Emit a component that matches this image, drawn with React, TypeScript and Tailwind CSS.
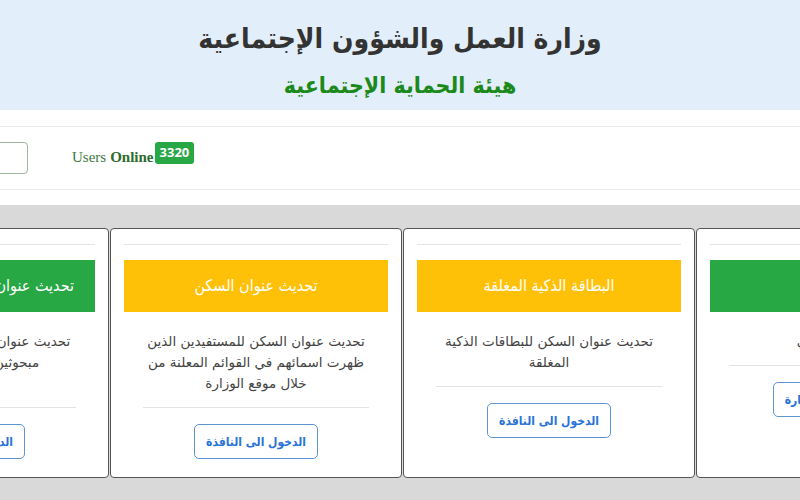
import React from "react";

type Card = {
  title: string;
  color: "yellow" | "green";
  lines: string[];
  button: string;
};

const cards: Card[] = [
  {
    title: "تحديث عنوان السكن للمبحوثين الجدد",
    color: "green",
    lines: ["تحديث عنوان السكن للمستفيدين الغير", "مبحوثين وبحاجة الى تحديث", "البيانات"],
    button: "الدخول الى النافذة",
  },
  {
    title: "تحديث عنوان السكن",
    color: "yellow",
    lines: ["تحديث عنوان السكن للمستفيدين الذين", "ظهرت اسمائهم في القوائم المعلنة من", "خلال موقع الوزارة"],
    button: "الدخول الى النافذة",
  },
  {
    title: "البطاقة الذكية المغلقة",
    color: "yellow",
    lines: ["تحديث عنوان السكن للبطاقات الذكية", "المغلقة"],
    button: "الدخول الى النافذة",
  },
  {
    title: "الاستمارة",
    color: "green",
    lines: ["التحديث السنوي"],
    button: "الدخول الى الاستمارة",
  },
];

const arabic = { fontFamily: '"DejaVu Sans", "Noto Sans", sans-serif' };
const cond = { fontFamily: '"DejaVu Sans Condensed", "DejaVu Sans", sans-serif' };

function CardBox({ c }: { c: Card }) {
  return (
    <div
      dir="rtl"
      className="w-[292px] shrink-0 h-[250px] bg-white border border-[#555] rounded-[4px] px-[13px] pt-[15px] flex flex-col items-center"
      style={arabic}
    >
      <div className="w-full border-t border-[#e3e3e3]" />
      <div
        className={
          "mt-[15px] w-full h-[52px] flex items-center justify-center text-white text-[16px] whitespace-nowrap " +
          (c.color === "yellow" ? "bg-[#ffc107]" : "bg-[#28a745]")
        }
        style={cond}
      >
        {c.title}
      </div>
      <div className="mt-[19px] w-full text-center text-[13.5px] leading-[21px] text-[#444] whitespace-nowrap">
        {c.lines.map((l, i) => (
          <div key={i}>{l}</div>
        ))}
      </div>
      <div className="mt-[13px] w-[226px] border-t border-[#e3e3e3]" />
      <button
        className="mt-[16px] h-[35px] px-[11px] border border-[#5b95d6] rounded-[5px] text-[#2a73d6] font-bold text-[12px] bg-white whitespace-nowrap"
        style={cond}
      >
        {c.button}
      </button>
    </div>
  );
}

export default function App() {
  return (
    <div className="w-[800px] h-[500px] overflow-hidden bg-[#d9d9d9] flex flex-col">
      <div className="h-[110px] shrink-0 bg-[#e2eef9] flex flex-col items-center pt-[19px]" dir="rtl" style={cond}>
        <div className="text-[28px] leading-[40px] font-bold text-[#333]">وزارة العمل والشؤون الإجتماعية</div>
        <div className="mt-[11px] text-[23px] leading-[30px] font-bold text-[#1b8a1b]">هيئة الحماية الإجتماعية</div>
      </div>
      <div className="h-[95px] shrink-0 bg-white pt-[16px]">
        <div className="h-[64px] border-t border-b border-[#e8e8e8] flex items-center">
          <div className="ml-[-72px] w-[100px] h-[32px] border border-[#9cb59c] rounded-[4px] bg-white" />
          <div className="ml-[44px] flex items-center" style={{ fontFamily: '"Liberation Serif", serif' }}>
            <span className="text-[15px] text-[#3d7a3d] mt-[-2px]">Users</span>
            <span className="ml-[4px] text-[15px] font-bold text-[#2b6b2b] mt-[-2px]">Online</span>
            <span
              className="ml-px h-[22px] px-[5px] rounded-[3px] bg-[#28a745] text-white text-[13px] font-bold flex items-center mt-[-10px]"
              style={{ fontFamily: '"Open Sans", sans-serif' }}
            >
              3320
            </span>
          </div>
        </div>
      </div>
      <div className="pt-[23px] flex">
        <div className="flex gap-px ml-[-183px]">
          {cards.map((c, i) => (
            <CardBox key={i} c={c} />
          ))}
        </div>
      </div>
    </div>
  );
}
